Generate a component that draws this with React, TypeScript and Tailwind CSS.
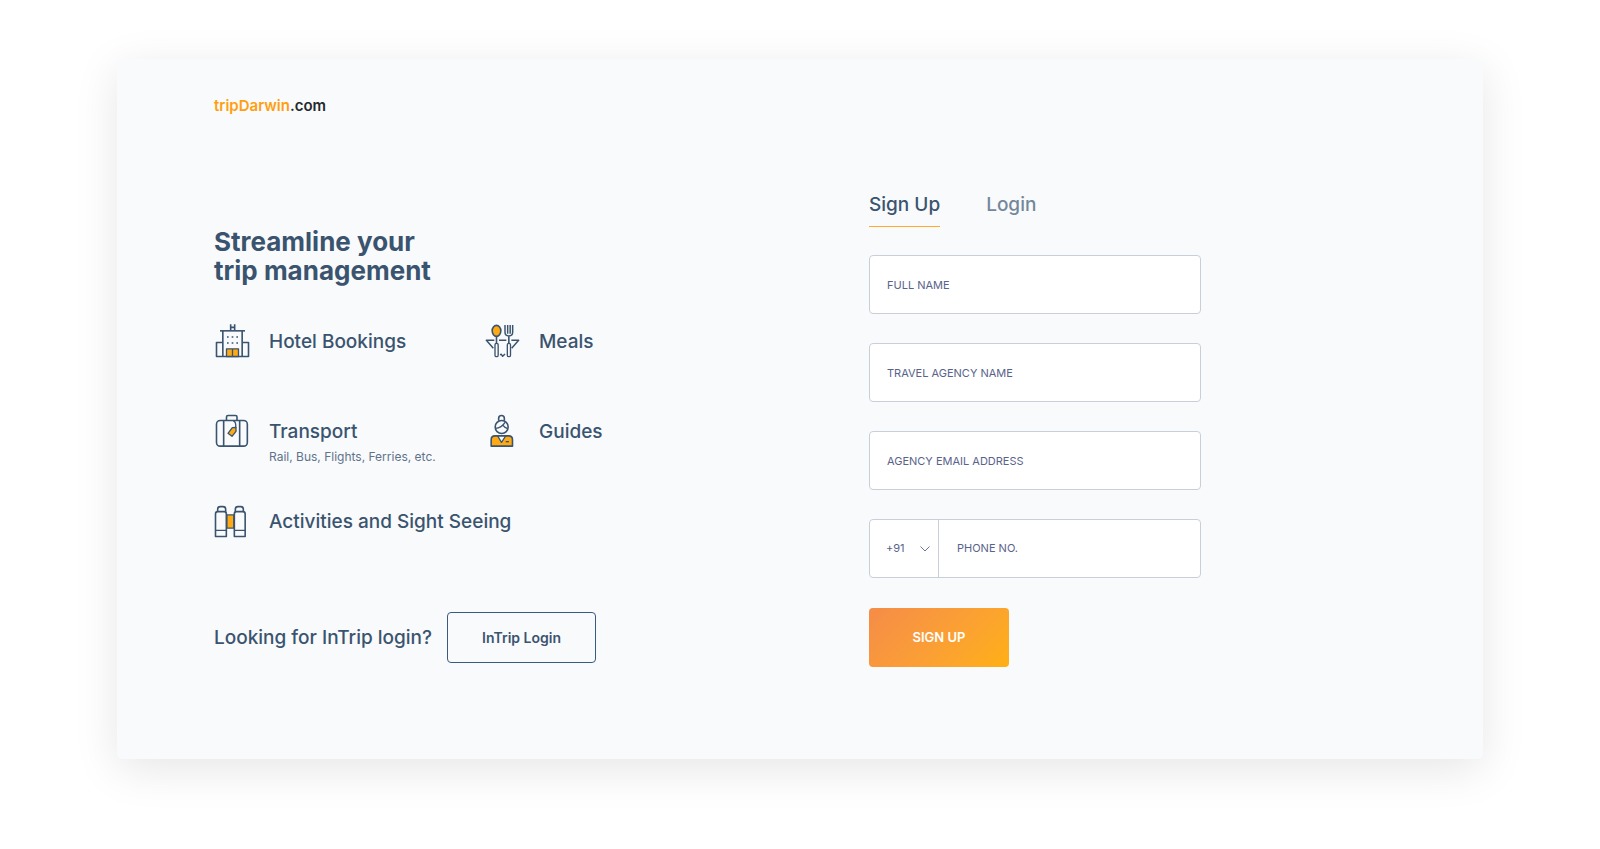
import type { ReactNode } from "react";

const NAVY = "#3a546f";
const AMBER = "#ffaa13";

function Icon({ children }: { children: ReactNode }) {
  return (
    <svg
      viewBox="27 24 108 108"
      className="h-9 w-9 shrink-0"
      fill="none"
      stroke={NAVY}
      strokeWidth="4.8"
      strokeLinejoin="round"
      aria-hidden="true"
    >
      {children}
    </svg>
  );
}

function HotelIcon() {
  return (
    <Icon>
      <path d="M77 28V46M89 28V46M77 37H89" />
      <path d="M45 47.5H120" />
      <path d="M53.5 48V124.5M111.5 48V124.5" />
      <path d="M53 82.5H34.5V124.5H130.5V82.5H112" />
      <path d="M64.5 101.5H100.5V124.5H64.5ZM82.5 101.5V124.5" fill={AMBER} strokeWidth="4" />
      <path d="M66 66H71M80 66H85M94 66H99M66 84H71M80 84H85M94 84H99" strokeWidth="4" />
    </Icon>
  );
}

function MealsIcon() {
  return (
    <Icon>
      <path d="M58 76H34L55 100M72 76H94M109 76H131L110 100M75 119L79 118L83 124L90 117" strokeWidth="4.4" />
      <ellipse cx="64.5" cy="47.5" rx="13" ry="16.5" fill={AMBER} />
      <path d="M64.5 64V86M101.5 64V84" />
      <rect x="60" y="85" width="9.5" height="40" rx="4.5" strokeWidth="4" />
      <rect x="97" y="85" width="9.5" height="40" rx="4.5" strokeWidth="4" />
      <path d="M90 30V52C90 59 95 63 101.5 63C108 63 113 59 113 52V30M98 30V56M105.5 30V56" strokeWidth="4.4" />
    </Icon>
  );
}

function SuitcaseIcon() {
  return (
    <Icon>
      <rect x="34.5" y="46.5" width="92.5" height="77" rx="11" />
      <path d="M56 47V123M104 47V123" />
      <path d="M64.5 46V36Q64.5 31.5 69 31.5H91.5Q96 31.5 96 36V46" />
      <path d="M85 48Q94 50 92 69" strokeWidth="4" />
      <path d="M82 68L93 67L93 79L81 94L69 85Z" fill={AMBER} strokeWidth="4" />
    </Icon>
  );
}

function GuideIcon() {
  return (
    <Icon>
      <circle cx="80" cy="66" r="19.5" />
      <path d="M71 47V40Q71 31.5 79.5 31.5Q88 31.5 88 40V47" />
      <path d="M61 70Q80 69 90 52M84 61Q89 68 98 71" strokeWidth="4" />
      <path d="M48.5 123.5V104Q48.5 92.5 60 92.5H101Q112.5 92.5 112.5 104V123.5Z" fill={AMBER} />
      <path d="M68 93L79.5 112L92 93Z" fill="#f9fafc" strokeWidth="4" />
      <path d="M92 110H102" strokeWidth="4" />
    </Icon>
  );
}

function BinocularsIcon() {
  return (
    <Icon>
      <rect x="65.5" y="59.5" width="21" height="40" fill={AMBER} strokeWidth="4" />
      <path d="M31.5 124.5V57Q31.5 50 38 50H58Q64 50 64 57V124.5Z" />
      <path d="M88 124.5V57Q88 50 94 50H114Q120.5 50 120.5 57V124.5Z" />
      <path d="M38 50V43Q38 35 46 35H54Q62 35 62 43V50M91 50V43Q91 35 99 35H107Q115 35 115 43V50" />
      <path d="M31 106H64M88 106H121" strokeWidth="4" />
    </Icon>
  );
}

interface FeatureProps {
  icon: ReactNode;
  title: string;
  note?: string;
  wide?: boolean;
}

function Feature({ icon, title, note, wide }: FeatureProps) {
  return (
    <li className={wide ? "col-span-2 flex items-start gap-[19px]" : "flex items-start gap-[19px]"}>
      {icon}
      <div>
        <h2 className="text-[19px] leading-[38px] font-medium">{title}</h2>
        {note && <p className="text-xs leading-3 whitespace-nowrap text-[#5f738b]">{note}</p>}
      </div>
    </li>
  );
}

function Field({ label, type = "text" }: { label: string; type?: string }) {
  return (
    <input
      type={type}
      aria-label={label}
      placeholder={label}
      className="h-[59px] w-full rounded border border-[#c9cfd9] bg-white px-[17px] text-[11px] text-[#59638a] placeholder:text-[#59638a] placeholder:opacity-100"
    />
  );
}

export default function App() {
  return (
    <div className="min-h-screen bg-white px-6 py-[59px] font-['Inter',sans-serif] text-[#3a546f]">
      <main className="mx-auto max-w-[1366px] rounded-md bg-[#f9fafc] px-[97px] pt-[35px] pb-[92px] shadow-[0_10px_45px_rgba(0,0,0,0.1)]">
        <header className="flex">
          <a href="#" className="text-[15px] leading-6 font-semibold text-[#ff9f10]">
            tripDarwin<span className="text-[#25282c]">.com</span>
          </a>
        </header>

        <div className="grid grid-cols-[655fr_517fr]">
          <section className="pt-[109px]">
            <h1 className="text-[26px] leading-[29px] font-bold">
              Streamline your
              <br />
              trip management
            </h1>

            <ul className="mt-[38px] grid auto-rows-[90px] grid-cols-[270px_1fr]">
              <Feature icon={<HotelIcon />} title="Hotel Bookings" />
              <Feature icon={<MealsIcon />} title="Meals" />
              <Feature icon={<SuitcaseIcon />} title="Transport" note="Rail, Bus, Flights, Ferries, etc." />
              <Feature icon={<GuideIcon />} title="Guides" />
              <Feature icon={<BinocularsIcon />} title="Activities and Sight Seeing" wide />
            </ul>

            <div className="mt-[19px] flex items-center gap-[15px]">
              <p className="text-[19px] leading-7 font-medium">Looking for InTrip login?</p>
              <button
                type="button"
                className="h-[51px] w-[149px] rounded border border-[#3a5a80] text-sm font-semibold"
              >
                InTrip Login
              </button>
            </div>
          </section>

          <section className="max-w-[332px] pt-[73px]">
            <div role="tablist" className="flex gap-[46px] text-[19px] leading-7 font-medium">
              <button type="button" role="tab" aria-selected="true" className="border-b border-[#ffaa2b] pb-[7px]">
                Sign Up
              </button>
              <button type="button" role="tab" aria-selected="false" className="pb-2 text-[#73879b]">
                Login
              </button>
            </div>

            <form className="mt-7" onSubmit={(event) => event.preventDefault()}>
              <div className="flex flex-col gap-[29px]">
                <Field label="FULL NAME" />
                <Field label="TRAVEL AGENCY NAME" />
                <Field label="AGENCY EMAIL ADDRESS" type="email" />

                <div className="flex h-[59px] rounded border border-[#c9cfd9] bg-white text-[11px] text-[#59638a]">
                  <div className="relative w-[69px] shrink-0 border-r border-[#c9cfd9]">
                    <select
                      aria-label="Country code"
                      className="h-full w-full appearance-none bg-transparent pl-4"
                    >
                      <option>+91</option>
                    </select>
                    <svg
                      viewBox="0 0 10 6"
                      className="pointer-events-none absolute top-1/2 right-2 h-1.5 w-2.5 -translate-y-1/2"
                      fill="none"
                      stroke="#6b7595"
                      aria-hidden="true"
                    >
                      <path d="M0.5 0.5L5 5L9.5 0.5" />
                    </svg>
                  </div>
                  <input
                    type="tel"
                    aria-label="PHONE NO."
                    placeholder="PHONE NO."
                    className="min-w-0 flex-1 rounded-r bg-transparent px-[18px] placeholder:text-[#59638a] placeholder:opacity-100"
                  />
                </div>
              </div>

              <button
                type="submit"
                className="mt-[30px] h-[59px] w-[140px] rounded bg-linear-135 from-[#f58c47] to-[#ffb010] text-[13px] font-semibold text-white"
              >
                SIGN UP
              </button>
            </form>
          </section>
        </div>
      </main>
    </div>
  );
}
